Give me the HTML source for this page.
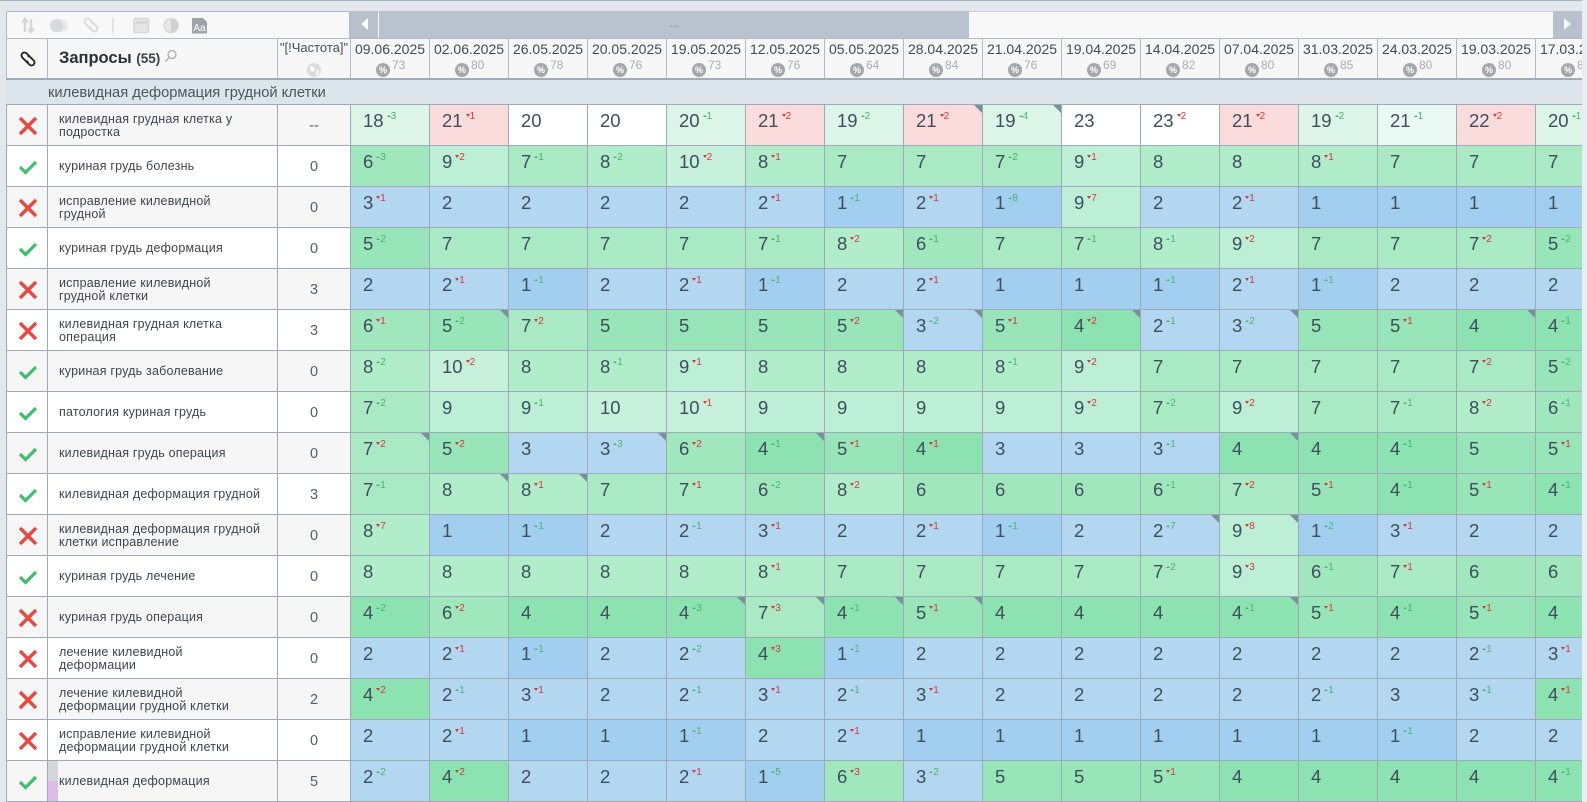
<!DOCTYPE html>
<html><head><meta charset="utf-8"><style>
html,body{margin:0;padding:0;width:1587px;height:802px;overflow:hidden;background:#e3e8ee;font-family:"Liberation Sans",sans-serif}
.a{position:absolute}
table{border-collapse:separate;border-spacing:0;table-layout:fixed}
#g{width:1264px}
#h{width:1264px}
#g td{width:79px;height:41px;box-sizing:border-box;border-left:1px solid #9eaaba;border-top:1px solid #9eaaba;padding:6px 0 0 12px;vertical-align:top;font-size:18.5px;line-height:20px;color:#3d4e5c;position:relative;white-space:nowrap;background:#fff}
b,u{font-weight:400;text-decoration:none;font-size:10px;line-height:10px;position:relative;top:-8px;margin-left:3px}
b{color:#45b56c}u{color:#d4383c}
b:before,u:before{content:"";display:inline-block;width:0;height:0;border-left:2px solid transparent;border-right:2px solid transparent;vertical-align:2px;margin-right:0}
b:before{border-bottom:2px solid #45b56c}u:before{border-top:3px solid #d4383c}
#g td.k:after{content:"";position:absolute;right:0;top:0;border-top:8px solid #76919a;border-left:8px solid transparent}
.c1{background:#a2cfef!important}.c2{background:#b3d6f1!important}.c4{background:#8ce2b1!important}.c5{background:#97e5b8!important}.c6{background:#a0e7be!important}.c7{background:#a9e9c3!important}.c8{background:#b1edcb!important}.c9{background:#bcefd5!important}.c0{background:#c7f0dc!important}.cg{background:#dcf5e8!important}.cp{background:#eaf9f3!important}.cr{background:#fbdcdc!important}
#h th{width:79px;height:41px;box-sizing:border-box;border-left:1px solid #b0bac8;position:relative;font-weight:400;font-size:14px;color:#3f4a55;padding:2px 0 0;vertical-align:top;line-height:17px;background:#f7f7f8;text-align:center;white-space:nowrap}
#h i{position:absolute;left:25px;top:24px;width:14px;height:14px;border-radius:50%;background:#a5a8ab;color:#fff;font:bold 9px/14px "Liberation Sans",sans-serif;text-align:center}
#h em{position:absolute;left:41px;top:19px;font:12px/14px "Liberation Sans",sans-serif;color:#a9aeb3}
#l td{box-sizing:border-box;height:41px;border-left:1px solid #9eaaba;border-top:1px solid #9eaaba;padding:0;background:#fff;vertical-align:middle}
#l tr:nth-child(odd) td{background:#f6f6f7}
#l .n{width:230px;padding:1px 0 0 11px;font-size:12.5px;line-height:12.5px;letter-spacing:.2px;color:#3c4650;white-space:nowrap;position:relative}
#l .i{width:41px}
#l .i svg{display:block;margin:1px 0 0 11px}
#l .f{width:73px;text-align:center;padding-top:1px;font-size:14.5px;color:#555f68}
</style></head><body>
<svg width="0" height="0" style="position:absolute"><defs>
<symbol id="x" viewBox="0 0 20 20"><path d="M2 2L18 18M18 2L2 18" stroke="#e8483f" stroke-width="3.4" fill="none"/></symbol>
<symbol id="c" viewBox="0 0 20 20"><path d="M2 10l5.500 5.500L18 5" stroke="#3fbf6d" stroke-width="3.2" fill="none"/></symbol>
<symbol id="lk" viewBox="0 0 18 18"><g transform="rotate(45 9 9)" fill="none"><path d="M8.500 6H4a3 3 0 0 0 0 6h4.500a3 3 0 0 0 2.500-1.500"/><path d="M9.500 12H14a3 3 0 0 0 0-6H9.500a3 3 0 0 0-2.500 1.500"/></g></symbol>
</defs></svg>
<div class="a" style="left:0;top:0;width:1582px;height:1px;background:#a9b4c4"></div>
<div class="a" style="left:1582px;top:0;width:5px;height:802px;background:#e9edf1"></div>
<!-- toolbar -->
<div class="a" style="left:6px;top:11px;width:344px;height:27px;box-sizing:border-box;background:#f8f8f8;border:1px solid #b0bac8;border-bottom:0"></div>
<svg class="a" style="left:6px;top:11px" width="344" height="27" fill="none">
<path d="M19 9v12M16.500 11.500L19 8l2.500 3.500M25 19V8M22.500 17.500L25 21l2.500-3.500" stroke="#d6d6d6" stroke-width="2.400"/>
<rect x="44" y="8" width="18" height="13" rx="6.500" fill="#e6e8ea"/><circle cx="50.500" cy="14.500" r="6.500" fill="#d6dae0"/>
<svg x="76" y="5" width="18" height="18" viewBox="0 0 18 18" stroke="#dcdcdc" stroke-width="2"><use href="#lk"/></svg>
<rect x="106" y="7" width="1.500" height="15" fill="#dcdcdc"/>
<rect x="128" y="7.500" width="14.500" height="14" rx="1.500" fill="#e6e6e6" stroke="#d6d6d6" stroke-width="1.500"/><path d="M130 11.500h10.500" stroke="#cfcfcf" stroke-width="2"/>
<circle cx="165" cy="14.500" r="7" fill="#e6e6e6" stroke="#dadada" stroke-width="1.500"/><path d="M165 7.500a7 7 0 0 1 0 14z" fill="#d0d0d0"/>
<path d="M186 7h11l4 4v11.500h-15z" fill="#9fa3a8"/>
<text x="193.500" y="20" font-family="Liberation Sans" font-size="10" fill="#fff" text-anchor="middle">Aa</text>
</svg>
<!-- scrollbar -->
<div class="a" style="left:350px;top:11px;width:1232px;height:27px;background:#f8f8f8;border-top:1px solid #c9d0da;box-sizing:border-box"></div>
<div class="a" style="left:350px;top:11px;width:28px;height:27px;background:#b8c0cc"></div>
<div class="a" style="left:379px;top:11px;width:590px;height:27px;background:#b9c2ce;text-align:center;color:#6e7884;font-size:11px;line-height:26px">...</div>
<div class="a" style="left:1553px;top:11px;width:29px;height:27px;background:#b8c0cc"></div>
<svg class="a" style="left:350px;top:11px" width="28" height="27"><path d="M18 7v12l-7-6z" fill="#fff"/></svg>
<svg class="a" style="left:1553px;top:11px" width="29" height="27"><path d="M11 7v12l7-6z" fill="#f4f6f8"/></svg>
<!-- header left -->
<div class="a" style="left:6px;top:38px;width:344px;height:41px;box-sizing:border-box;background:#f7f7f8;border-top:1px solid #b0bac8;border-left:1px solid #b0bac8"></div>
<div class="a" style="left:47px;top:38px;width:1px;height:41px;background:#b0bac8"></div>
<div class="a" style="left:277px;top:38px;width:1px;height:41px;background:#b0bac8"></div>
<svg class="a" style="left:19px;top:50px" width="18" height="18" stroke="#1d1f22" stroke-width="1.800"><use href="#lk"/></svg>
<div class="a" style="left:59px;top:48px;font-weight:bold;font-size:16.500px;line-height:20px;color:#2b3138;white-space:nowrap">Запросы <span style="font-size:13.500px;color:#3a4149">(55)</span></div>
<svg class="a" style="left:164px;top:49px" width="14" height="14" fill="none" stroke="#a8a8a8" stroke-width="1.200"><circle cx="8" cy="5.500" r="4"/><path d="M5 8.500L1.500 12.500"/></svg>
<div class="a" style="left:278px;top:41px;width:72px;text-align:center;font-size:13px;line-height:14px;color:#464f58;white-space:nowrap">"[!Частота]"</div>
<svg class="a" style="left:307px;top:63px" width="14" height="14"><circle cx="7" cy="7" r="7" fill="#dcdcdc"/><path d="M3 3l4 1 1 3-3 2-2-2zM9 8l3-1 0 3-3 3z" fill="#fff"/></svg>
<!-- header dates -->
<div class="a" style="left:350px;top:38px;width:1232px;height:41px;overflow:hidden;border-top:1px solid #b0bac8;box-sizing:border-box">
<table id="h"><tr><th>09.06.2025<i>%</i><em>73</em></th><th>02.06.2025<i>%</i><em>80</em></th><th>26.05.2025<i>%</i><em>78</em></th><th>20.05.2025<i>%</i><em>76</em></th><th>19.05.2025<i>%</i><em>73</em></th><th>12.05.2025<i>%</i><em>76</em></th><th>05.05.2025<i>%</i><em>64</em></th><th>28.04.2025<i>%</i><em>84</em></th><th>21.04.2025<i>%</i><em>76</em></th><th>19.04.2025<i>%</i><em>69</em></th><th>14.04.2025<i>%</i><em>82</em></th><th>07.04.2025<i>%</i><em>80</em></th><th>31.03.2025<i>%</i><em>85</em></th><th>24.03.2025<i>%</i><em>80</em></th><th>19.03.2025<i>%</i><em>80</em></th><th>17.03.2025<i>%</i><em>80</em></th></tr></table></div>
<div class="a" style="left:6px;top:78px;width:1576px;height:2px;background:#a1acba"></div>
<!-- group -->
<div class="a" style="left:6px;top:80px;width:1576px;height:24px;background:#dde5ec"></div>
<div class="a" style="left:48px;top:83px;font-size:14.700px;line-height:20px;color:#4a555f;white-space:nowrap">килевидная деформация грудной клетки</div>
<!-- left table -->
<table id="l" class="a" style="left:6px;top:104px;width:344px">
<tr><td class="i"><svg width="20" height="20"><use href="#x"/></svg></td><td class="n">килевидная грудная клетка у<br>подростка</td><td class="f">--</td></tr>
<tr><td class="i"><svg width="20" height="20"><use href="#c"/></svg></td><td class="n">куриная грудь болезнь</td><td class="f">0</td></tr>
<tr><td class="i"><svg width="20" height="20"><use href="#x"/></svg></td><td class="n">исправление килевидной<br>грудной</td><td class="f">0</td></tr>
<tr><td class="i"><svg width="20" height="20"><use href="#c"/></svg></td><td class="n">куриная грудь деформация</td><td class="f">0</td></tr>
<tr><td class="i"><svg width="20" height="20"><use href="#x"/></svg></td><td class="n">исправление килевидной<br>грудной клетки</td><td class="f">3</td></tr>
<tr><td class="i"><svg width="20" height="20"><use href="#x"/></svg></td><td class="n">килевидная грудная клетка<br>операция</td><td class="f">3</td></tr>
<tr><td class="i"><svg width="20" height="20"><use href="#c"/></svg></td><td class="n">куриная грудь заболевание</td><td class="f">0</td></tr>
<tr><td class="i"><svg width="20" height="20"><use href="#c"/></svg></td><td class="n">патология куриная грудь</td><td class="f">0</td></tr>
<tr><td class="i"><svg width="20" height="20"><use href="#c"/></svg></td><td class="n">килевидная грудь операция</td><td class="f">0</td></tr>
<tr><td class="i"><svg width="20" height="20"><use href="#c"/></svg></td><td class="n">килевидная деформация грудной</td><td class="f">3</td></tr>
<tr><td class="i"><svg width="20" height="20"><use href="#x"/></svg></td><td class="n">килевидная деформация грудной<br>клетки исправление</td><td class="f">0</td></tr>
<tr><td class="i"><svg width="20" height="20"><use href="#c"/></svg></td><td class="n">куриная грудь лечение</td><td class="f">0</td></tr>
<tr><td class="i"><svg width="20" height="20"><use href="#x"/></svg></td><td class="n">куриная грудь операция</td><td class="f">0</td></tr>
<tr><td class="i"><svg width="20" height="20"><use href="#x"/></svg></td><td class="n">лечение килевидной<br>деформации</td><td class="f">0</td></tr>
<tr><td class="i"><svg width="20" height="20"><use href="#x"/></svg></td><td class="n">лечение килевидной<br>деформации грудной клетки</td><td class="f">2</td></tr>
<tr><td class="i"><svg width="20" height="20"><use href="#x"/></svg></td><td class="n">исправление килевидной<br>деформации грудной клетки</td><td class="f">0</td></tr>
<tr><td class="i"><svg width="20" height="20"><use href="#c"/></svg></td><td class="n">килевидная деформация</td><td class="f">5</td></tr>
</table>
<div class="a" style="left:48px;top:761px;width:10px;height:20px;background:#d5d8db"></div>
<div class="a" style="left:48px;top:781px;width:10px;height:20px;background:#dcbce8"></div>
<!-- grid -->
<div class="a" style="left:350px;top:104px;width:1232px;height:697px;overflow:hidden">
<table id="g">
<tr><td class="cg">18<b>3</b></td><td class="cr">21<u>1</u></td><td>20</td><td>20</td><td class="cg">20<b>1</b></td><td class="cr">21<u>2</u></td><td class="cg">19<b>2</b></td><td class="cr k">21<u>2</u></td><td class="cg k">19<b>4</b></td><td>23</td><td>23<u>2</u></td><td class="cr">21<u>2</u></td><td class="cg">19<b>2</b></td><td class="cp">21<b>1</b></td><td class="cr">22<u>2</u></td><td class="cg">20<b>1</b></td></tr>
<tr><td class="c6">6<b>3</b></td><td class="c9">9<u>2</u></td><td class="c7">7<b>1</b></td><td class="c8">8<b>2</b></td><td class="c0">10<u>2</u></td><td class="c8">8<u>1</u></td><td class="c7">7</td><td class="c7">7</td><td class="c7">7<b>2</b></td><td class="c9">9<u>1</u></td><td class="c8">8</td><td class="c8">8</td><td class="c8">8<u>1</u></td><td class="c7">7</td><td class="c7">7</td><td class="c7">7</td></tr>
<tr><td class="c2">3<u>1</u></td><td class="c2">2</td><td class="c2">2</td><td class="c2">2</td><td class="c2">2</td><td class="c2">2<u>1</u></td><td class="c1">1<b>1</b></td><td class="c2">2<u>1</u></td><td class="c1">1<b>8</b></td><td class="c9">9<u>7</u></td><td class="c2">2</td><td class="c2">2<u>1</u></td><td class="c1">1</td><td class="c1">1</td><td class="c1">1</td><td class="c1">1</td></tr>
<tr><td class="c5">5<b>2</b></td><td class="c7">7</td><td class="c7">7</td><td class="c7">7</td><td class="c7">7</td><td class="c7">7<b>1</b></td><td class="c8">8<u>2</u></td><td class="c6">6<b>1</b></td><td class="c7">7</td><td class="c7">7<b>1</b></td><td class="c8">8<b>1</b></td><td class="c9">9<u>2</u></td><td class="c7">7</td><td class="c7">7</td><td class="c7">7<u>2</u></td><td class="c5">5<b>2</b></td></tr>
<tr><td class="c2">2</td><td class="c2">2<u>1</u></td><td class="c1">1<b>1</b></td><td class="c2">2</td><td class="c2">2<u>1</u></td><td class="c1">1<b>1</b></td><td class="c2">2</td><td class="c2">2<u>1</u></td><td class="c1">1</td><td class="c1">1</td><td class="c1">1<b>1</b></td><td class="c2">2<u>1</u></td><td class="c1">1<b>1</b></td><td class="c2">2</td><td class="c2">2</td><td class="c2">2</td></tr>
<tr><td class="c6">6<u>1</u></td><td class="c5 k">5<b>2</b></td><td class="c7">7<u>2</u></td><td class="c5">5</td><td class="c5">5</td><td class="c5">5</td><td class="c5 k">5<u>2</u></td><td class="c2 k">3<b>2</b></td><td class="c5">5<u>1</u></td><td class="c4 k">4<u>2</u></td><td class="c2">2<b>1</b></td><td class="c2 k">3<b>2</b></td><td class="c5">5</td><td class="c5">5<u>1</u></td><td class="c4 k">4</td><td class="c4">4<b>1</b></td></tr>
<tr><td class="c8">8<b>2</b></td><td class="c0">10<u>2</u></td><td class="c8">8</td><td class="c8">8<b>1</b></td><td class="c9">9<u>1</u></td><td class="c8">8</td><td class="c8">8</td><td class="c8">8</td><td class="c8">8<b>1</b></td><td class="c9">9<u>2</u></td><td class="c7">7</td><td class="c7">7</td><td class="c7">7</td><td class="c7">7</td><td class="c7">7<u>2</u></td><td class="c5">5<b>2</b></td></tr>
<tr><td class="c7">7<b>2</b></td><td class="c9">9</td><td class="c9">9<b>1</b></td><td class="c0">10</td><td class="c0">10<u>1</u></td><td class="c9">9</td><td class="c9">9</td><td class="c9">9</td><td class="c9">9</td><td class="c9">9<u>2</u></td><td class="c7">7<b>2</b></td><td class="c9">9<u>2</u></td><td class="c7">7</td><td class="c7">7<b>1</b></td><td class="c8">8<u>2</u></td><td class="c6">6<b>1</b></td></tr>
<tr><td class="c7 k">7<u>2</u></td><td class="c5">5<u>2</u></td><td class="c2">3</td><td class="c2 k">3<b>3</b></td><td class="c6">6<u>2</u></td><td class="c4 k">4<b>1</b></td><td class="c5">5<u>1</u></td><td class="c4">4<u>1</u></td><td class="c2">3</td><td class="c2">3</td><td class="c2">3<b>1</b></td><td class="c4 k">4</td><td class="c4">4</td><td class="c4">4<b>1</b></td><td class="c5">5</td><td class="c5">5<u>1</u></td></tr>
<tr><td class="c7">7<b>1</b></td><td class="c8 k">8</td><td class="c8 k">8<u>1</u></td><td class="c7">7</td><td class="c7">7<u>1</u></td><td class="c6">6<b>2</b></td><td class="c8">8<u>2</u></td><td class="c6">6</td><td class="c6">6</td><td class="c6">6</td><td class="c6">6<b>1</b></td><td class="c7">7<u>2</u></td><td class="c5">5<u>1</u></td><td class="c4">4<b>1</b></td><td class="c5">5<u>1</u></td><td class="c4">4<b>1</b></td></tr>
<tr><td class="c8">8<u>7</u></td><td class="c1">1</td><td class="c1">1<b>1</b></td><td class="c2">2</td><td class="c2">2<b>1</b></td><td class="c2">3<u>1</u></td><td class="c2">2</td><td class="c2">2<u>1</u></td><td class="c1">1<b>1</b></td><td class="c2">2</td><td class="c2 k">2<b>7</b></td><td class="c9 k">9<u>8</u></td><td class="c1">1<b>2</b></td><td class="c2">3<u>1</u></td><td class="c2">2</td><td class="c2">2</td></tr>
<tr><td class="c8">8</td><td class="c8">8</td><td class="c8">8</td><td class="c8">8</td><td class="c8">8</td><td class="c8">8<u>1</u></td><td class="c7">7</td><td class="c7">7</td><td class="c7">7</td><td class="c7">7</td><td class="c7">7<b>2</b></td><td class="c9">9<u>3</u></td><td class="c6">6<b>1</b></td><td class="c7">7<u>1</u></td><td class="c6">6</td><td class="c6">6</td></tr>
<tr><td class="c4">4<b>2</b></td><td class="c6">6<u>2</u></td><td class="c4">4</td><td class="c4">4</td><td class="c4 k">4<b>3</b></td><td class="c7 k">7<u>3</u></td><td class="c4 k">4<b>1</b></td><td class="c5 k">5<u>1</u></td><td class="c4">4</td><td class="c4">4</td><td class="c4">4</td><td class="c4 k">4<b>1</b></td><td class="c5">5<u>1</u></td><td class="c4">4<b>1</b></td><td class="c5">5<u>1</u></td><td class="c4">4</td></tr>
<tr><td class="c2">2</td><td class="c2">2<u>1</u></td><td class="c1">1<b>1</b></td><td class="c2">2</td><td class="c2">2<b>2</b></td><td class="c4">4<u>3</u></td><td class="c1">1<b>1</b></td><td class="c2">2</td><td class="c2">2</td><td class="c2">2</td><td class="c2">2</td><td class="c2">2</td><td class="c2">2</td><td class="c2">2</td><td class="c2">2<b>1</b></td><td class="c2">3<u>1</u></td></tr>
<tr><td class="c4">4<u>2</u></td><td class="c2">2<b>1</b></td><td class="c2">3<u>1</u></td><td class="c2">2</td><td class="c2">2<b>1</b></td><td class="c2">3<u>1</u></td><td class="c2">2<b>1</b></td><td class="c2">3<u>1</u></td><td class="c2">2</td><td class="c2">2</td><td class="c2">2</td><td class="c2">2</td><td class="c2">2<b>1</b></td><td class="c2">3</td><td class="c2">3<b>1</b></td><td class="c4">4<u>1</u></td></tr>
<tr><td class="c2">2</td><td class="c2">2<u>1</u></td><td class="c1">1</td><td class="c1">1</td><td class="c1">1<b>1</b></td><td class="c2">2</td><td class="c2">2<u>1</u></td><td class="c1">1</td><td class="c1">1</td><td class="c1">1</td><td class="c1">1</td><td class="c1">1</td><td class="c1">1</td><td class="c1">1<b>1</b></td><td class="c2">2</td><td class="c2">2</td></tr>
<tr><td class="c2">2<b>2</b></td><td class="c4">4<u>2</u></td><td class="c2">2</td><td class="c2">2</td><td class="c2">2<u>1</u></td><td class="c1">1<b>5</b></td><td class="c6">6<u>3</u></td><td class="c2">3<b>2</b></td><td class="c5">5</td><td class="c5">5</td><td class="c5">5<u>1</u></td><td class="c4">4</td><td class="c4">4</td><td class="c4">4</td><td class="c4">4</td><td class="c4">4<b>1</b></td></tr>
</table></div>
<div class="a" style="left:6px;top:801px;width:1576px;height:1px;background:#9eaaba"></div>
</body></html>
